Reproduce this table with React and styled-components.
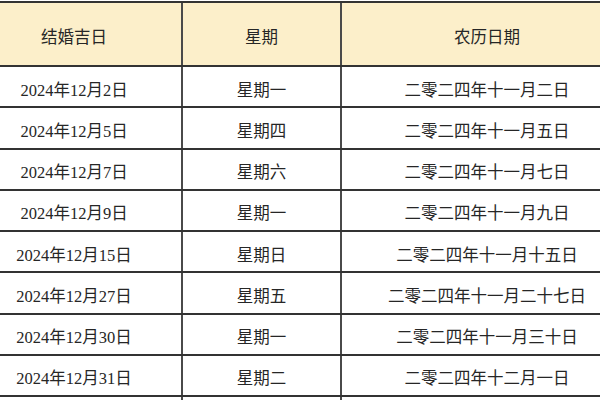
import React from "react";
import styled, { createGlobalStyle } from "styled-components";

const Global = createGlobalStyle`
  html, body { margin: 0; padding: 0; background: #fff; overflow: hidden; }
  body { width: 600px; height: 400px; }
`;

const Viewport = styled.div`
  width: 600px;
  height: 400px;
  overflow: hidden;
  padding-top: 1px;
  box-sizing: border-box;
`;

const Table = styled.div`
  margin-left: -33px;
  width: 665px;
  display: flex;
  flex-direction: column;
  font-family: "Liberation Serif", "Noto Sans CJK SC", serif;
  font-size: 16.5px;
  color: #262626;
`;

const Row = styled.div`
  display: grid;
  grid-template-columns: 216px 159px 290px;
  box-sizing: border-box;
  height: ${(p) => (p.$head ? "66px" : "41.25px")};
  background: ${(p) => (p.$head ? "#fcefca" : "#fff")};
  border-top: ${(p) => (p.$head ? "2px solid #333" : "none")};
  border-bottom: 2px solid #333;
`;

const Cell = styled.div`
  display: flex;
  align-items: center;
  justify-content: center;
  padding-top: ${(p) => (p.$head ? "4px" : "4px")};
  box-sizing: border-box;
  white-space: nowrap;
  border-right: ${(p) => (p.$last ? "none" : "2px solid #4a4a4a")};
  font-family: ${(p) => (p.$head ? `"Noto Sans CJK SC", sans-serif` : "inherit")};
`;

const rows = [
  ["2024年12月2日", "星期一", "二零二四年十一月二日"],
  ["2024年12月5日", "星期四", "二零二四年十一月五日"],
  ["2024年12月7日", "星期六", "二零二四年十一月七日"],
  ["2024年12月9日", "星期一", "二零二四年十一月九日"],
  ["2024年12月15日", "星期日", "二零二四年十一月十五日"],
  ["2024年12月27日", "星期五", "二零二四年十一月二十七日"],
  ["2024年12月30日", "星期一", "二零二四年十一月三十日"],
  ["2024年12月31日", "星期二", "二零二四年十二月一日"],
];

export default function App() {
  return (
    <Viewport>
      <Global />
      <Table>
        <Row $head>
          <Cell $head>结婚吉日</Cell>
          <Cell $head>星期</Cell>
          <Cell $head $last>农历日期</Cell>
        </Row>
        {rows.map((r) => (
          <Row key={r[0]}>
            <Cell>{r[0]}</Cell>
            <Cell>{r[1]}</Cell>
            <Cell $last>{r[2]}</Cell>
          </Row>
        ))}
        <Row>
          <Cell />
          <Cell />
          <Cell $last />
        </Row>
      </Table>
    </Viewport>
  );
}
